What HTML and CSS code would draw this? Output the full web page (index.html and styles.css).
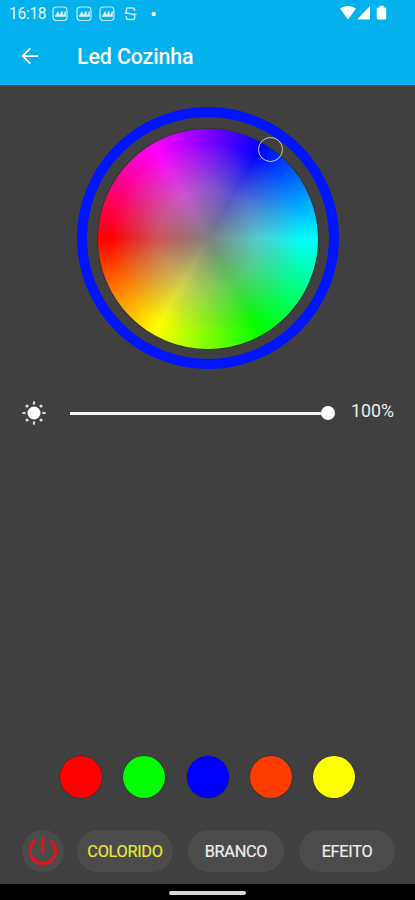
FILE: index.html
```html
<!DOCTYPE html>
<html lang="pt-BR">
<head>
<meta charset="utf-8">
<title>Led Cozinha</title>
<link rel="stylesheet" href="styles.css">
</head>
<body>
<div class="screen">
  <header class="header">
    <div class="status">
      <span class="time">16:18</span>
      <svg class="notices" width="106" height="18" viewBox="0 0 106 18" fill="none" stroke="#c4ecfc" stroke-width="1.200">
        <defs>
          <g id="thumb"><rect x="1" y="2" width="14" height="13.500" rx="3.500"/><path d="M3 11.500L6 6.500l1.500 4L10 6l1 5 2.500-5v5.500z" fill="#d9f3ff" stroke-width=".7"/></g>
        </defs>
        <use href="#thumb"/>
        <use href="#thumb" x="24"/>
        <use href="#thumb" x="47"/>
        <path d="M82.500 6V4.500Q82.500 3 81 3h-5q-1.700 0-1.700 1.700v1.800Q74.300 8 76 8.300l5 1q1.700.4 1.700 2v1.200q0 1.900-1.700 1.900h-5q-1.700 0-1.700-1.700v-1.500M72.500 8.300H76M81 9.300h3.500" stroke-width="1.500"/>
        <circle cx="101.800" cy="9" r="2.300" fill="#e9f8ff" stroke="none"/>
      </svg>
      <svg class="signals" width="48" height="16" viewBox="0 0 48 16" fill="#fff">
        <path d="M0 3.500C4.500 0 11.500 0 16 3.500L8 14.500z"/>
        <path d="M30 1v13.500H17z"/>
        <path d="M39.500.8h4v1.600h1.700q1 0 1 1v10q0 1-1 1h-7.400q-1 0-1-1v-10q0-1 1-1h1.700z"/>
      </svg>
    </div>
    <div class="appbar">
      <svg class="back" width="18" height="18" viewBox="0 0 18 18" fill="none" stroke="#fff" stroke-width="1.900"><path d="M17.200 9H1.800M9.300 1.300L1.600 9l7.700 7.700"/></svg>
      <h1 class="title">Led Cozinha</h1>
    </div>
  </header>
  <main class="content">
    <div class="ring">
      <div class="wheel"></div>
      <span class="picker"></span>
    </div>
    <div class="brightness">
      <svg class="sun" width="26" height="26" viewBox="0 0 26 26" fill="#fff">
        <circle cx="13" cy="13" r="6.500"/>
        <path d="M11.700 4.600h2.600L13.800 1.200h-1.600zM11.700 21.400h2.600l-.5 3.400h-1.600zM4.600 11.700v2.600l-3.400-.5v-1.600zM21.400 11.700v2.600l3.400-.5v-1.600z" fill="#ddd"/>
        <g fill="#ddd"><circle cx="6" cy="6" r="1.600"/><circle cx="20" cy="6" r="1.600"/><circle cx="6" cy="20" r="1.600"/><circle cx="20" cy="20" r="1.600"/></g>
      </svg>
      <div class="slider"><span class="track"></span><span class="thumb"></span></div>
      <span class="percent">100%</span>
    </div>
    <div class="swatches">
      <span class="swatch red"></span>
      <span class="swatch green"></span>
      <span class="swatch blue"></span>
      <span class="swatch orange"></span>
      <span class="swatch yellow"></span>
    </div>
    <div class="modes">
      <button class="power" aria-label="Ligar">
        <svg width="30" height="30" viewBox="0 0 30 30" fill="none" stroke="#e5141c" stroke-width="3"><path d="M7 4.900a12.700 12.700 0 1 0 15.600 0M14.800 .8V17"/></svg>
      </button>
      <button class="mode active">COLORIDO</button>
      <button class="mode">BRANCO</button>
      <button class="mode">EFEITO</button>
    </div>
  </main>
  <footer class="navbar"><span class="handle"></span></footer>
</div>
</body>
</html>
```

FILE: styles.css
```css
* { box-sizing: border-box; }

body {
  margin: 0;
  font-family: Roboto, "Liberation Sans", sans-serif;
  color: #fff;
}

.screen {
  display: flex;
  flex-direction: column;
  height: 900px;
  background: #404040;
}

.header {
  height: 85px;
  background: #03b1ed;
}

.status {
  display: flex;
  align-items: center;
  height: 28px;
  padding: 0 27px 0 9px;
}

.time {
  width: 43px;
  font-size: 15.6px;
  letter-spacing: -0.3px;
  line-height: 28px;
  color: #e6f7ff;
  white-space: nowrap;
}

.signals { margin: -2px 0 0 auto; }

.appbar {
  display: flex;
  align-items: center;
  height: 57px;
  padding: 0 21px;
}

.back { margin-top: -2px; }

.title {
  margin: 0 0 0 38px;
  font-size: 21.3px;
  font-weight: 500;
  letter-spacing: -0.08px;
  line-height: 57px;
}

.content {
  display: flex;
  flex: 1;
  flex-direction: column;
  align-items: center;
}

.ring {
  position: relative;
  width: 262px;
  height: 262px;
  margin: 22px 0 0 1px;
  padding: 11.5px 11px 10.5px;
  border: 10px solid #0014ff;
  border-radius: 50%;
}

.wheel {
  width: 220px;
  height: 220px;
  border-radius: 50%;
  background:
    radial-gradient(closest-side, #808080 0%, rgba(160, 160, 160, 0.53) 45%, rgba(160, 160, 160, 0) 88%),
    conic-gradient(from 30deg, #00f, #0ff, #0f0, #ff0, #f00, #f0f, #00f);
  box-shadow: 0 0 1px 0.5px #262626;
}

.picker {
  position: absolute;
  top: 20px;
  left: 171px;
  width: 25px;
  height: 25px;
  border: 1.5px solid #c8c8d2;
  border-radius: 50%;
}

.brightness {
  display: flex;
  align-items: center;
  align-self: stretch;
  height: 26px;
  margin-top: 31px;
  padding: 0 20px 0 21px;
}

.slider {
  display: flex;
  align-items: center;
  width: 265px;
  margin-left: 23px;
}

.track {
  flex: 1;
  height: 3px;
  background: #f5f5f5;
}

.thumb {
  width: 14px;
  height: 14px;
  margin-left: -1px;
  border-radius: 50%;
  background: #fff;
}

.percent {
  margin: -4px 1px 0 auto;
  font-size: 17.8px;
  line-height: 22px;
  color: #eee;
}

.swatches {
  display: flex;
  gap: 21.3px;
  margin-top: auto;
}

.swatch {
  width: 42px;
  height: 42px;
  border-radius: 50%;
  box-shadow: 0 0 1px 0.5px #302c34;
}

.red { background: #f00; }
.green { background: #0f0; }
.blue { background: #00f; }
.orange { background: #ff3c00; }
.yellow { background: #ff0; }

.modes {
  display: flex;
  align-self: stretch;
  gap: 15px;
  margin: 32px 20px 12px 22px;
}

.power,
.mode {
  height: 42px;
  padding: 0;
  border: 0;
  border-radius: 21px;
  background: #4b4b4b;
}

.power {
  display: flex;
  align-items: center;
  justify-content: center;
  width: 42px;
  margin-right: -2px;
}

.power svg { margin-top: -1px; }

.mode {
  flex: 1;
  font: 400 16.3px/44px Roboto, "Liberation Sans", sans-serif;
  letter-spacing: -0.28px;
  color: #eee;
  -webkit-text-stroke: 0.2px currentColor;
}

.active { color: #e8e832; }

.navbar {
  display: flex;
  align-items: center;
  justify-content: center;
  height: 16px;
  background: #000;
}

.handle {
  width: 77px;
  height: 4px;
  margin-top: 1px;
  border-radius: 2px;
  background: #d8d8d8;
}
```
